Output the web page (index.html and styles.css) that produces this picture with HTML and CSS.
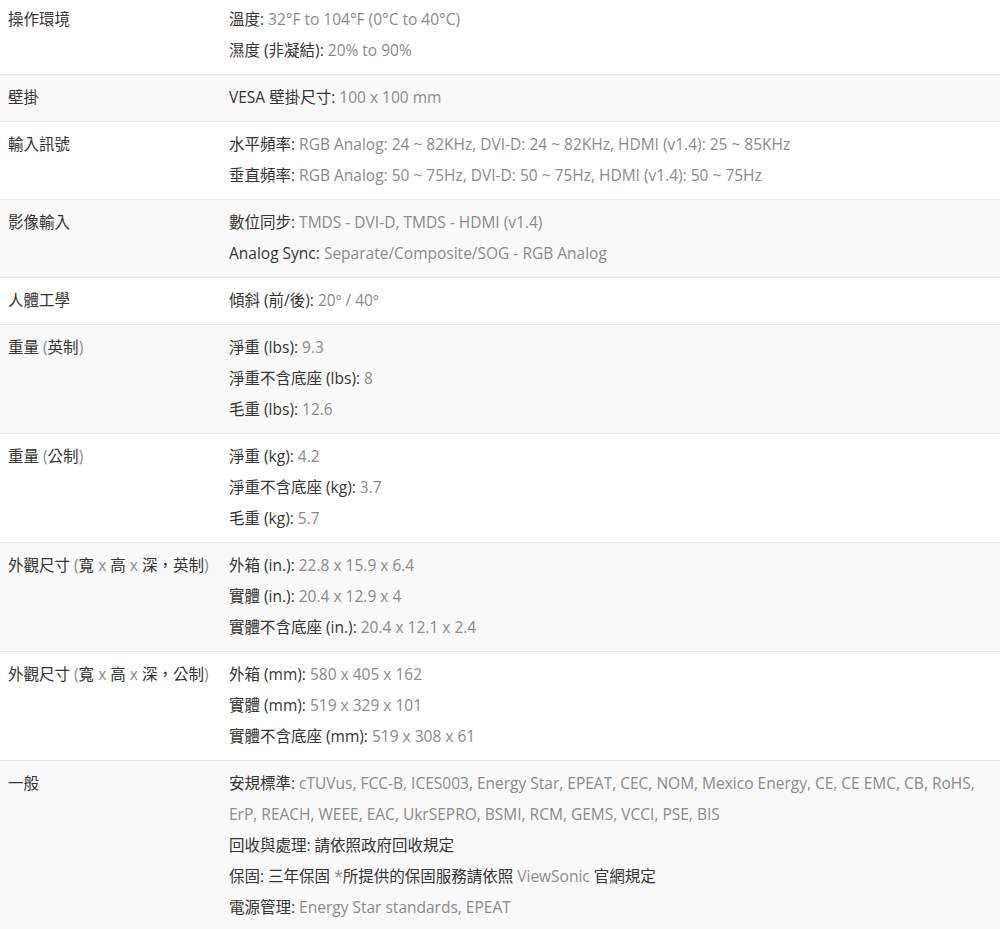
FILE: index.html
```html
<!DOCTYPE html>
<html lang="zh-Hant">
<head>
  <meta charset="UTF-8" />
  <meta name="viewport" content="width=device-width, initial-scale=1" />
  <title>規格</title>
  <link rel="stylesheet" href="styles.css">
</head>

<body>
  <div class="specs">
    <div class="row">
      <div class="label">操作環境</div>
      <div class="value">
        <p><span class="key">溫度:</span> 32°F to 104°F (0°C to 40°C)</p>
        <p><span class="key">濕度 (非凝結):</span> 20% to 90%</p>
      </div>
    </div>

    <div class="row">
      <div class="label">壁掛</div>
      <div class="value">
        <p><span class="key">VESA 壁掛尺寸:</span> 100 x 100 mm</p>
      </div>
    </div>

    <div class="row">
      <div class="label">輸入訊號</div>
      <div class="value">
        <p><span class="key">水平頻率:</span> RGB Analog: 24 ~ 82KHz, DVI-D: 24 ~ 82KHz, HDMI (v1.4): 25 ~ 85KHz</p>
        <p><span class="key">垂直頻率:</span> RGB Analog: 50 ~ 75Hz, DVI-D: 50 ~ 75Hz, HDMI (v1.4): 50 ~ 75Hz</p>
      </div>
    </div>

    <div class="row">
      <div class="label">影像輸入</div>
      <div class="value">
        <p><span class="key">數位同步:</span> TMDS - DVI-D, TMDS - HDMI (v1.4)</p>
        <p><span class="key">Analog Sync:</span> Separate/Composite/SOG - RGB Analog</p>
      </div>
    </div>

    <div class="row">
      <div class="label">人體工學</div>
      <div class="value">
        <p><span class="key">傾斜 (前/後):</span> 20º / 40º</p>
      </div>
    </div>

    <div class="row">
      <div class="label">重量 <span class="lat">(</span>英制<span class="lat">)</span></div>
      <div class="value">
        <p><span class="key">淨重 (lbs):</span> 9.3</p>
        <p><span class="key">淨重不含底座 (lbs):</span> 8</p>
        <p><span class="key">毛重 (lbs):</span> 12.6</p>
      </div>
    </div>

    <div class="row">
      <div class="label">重量 <span class="lat">(</span>公制<span class="lat">)</span></div>
      <div class="value">
        <p><span class="key">淨重 (kg):</span> 4.2</p>
        <p><span class="key">淨重不含底座 (kg):</span> 3.7</p>
        <p><span class="key">毛重 (kg):</span> 5.7</p>
      </div>
    </div>

    <div class="row">
      <div class="label">外觀尺寸 <span class="lat">(</span>寬 <span class="lat">x</span> 高 <span class="lat">x</span> 深，英制<span class="lat">)</span></div>
      <div class="value">
        <p><span class="key">外箱 (in.):</span> 22.8 x 15.9 x 6.4</p>
        <p><span class="key">實體 (in.):</span> 20.4 x 12.9 x 4</p>
        <p><span class="key">實體不含底座 (in.):</span> 20.4 x 12.1 x 2.4</p>
      </div>
    </div>

    <div class="row">
      <div class="label">外觀尺寸 <span class="lat">(</span>寬 <span class="lat">x</span> 高 <span class="lat">x</span> 深，公制<span class="lat">)</span></div>
      <div class="value">
        <p><span class="key">外箱 (mm):</span> 580 x 405 x 162</p>
        <p><span class="key">實體 (mm):</span> 519 x 329 x 101</p>
        <p><span class="key">實體不含底座 (mm):</span> 519 x 308 x 61</p>
      </div>
    </div>

    <div class="row">
      <div class="label">一般</div>
      <div class="value">
        <p><span class="key">安規標準:</span> cTUVus, FCC-B, ICES003, Energy Star, EPEAT, CEC, NOM, Mexico Energy, CE, CE EMC, CB, RoHS, ErP, REACH, WEEE, EAC, UkrSEPRO, BSMI, RCM, GEMS, VCCI, PSE, BIS</p>
        <p><span class="key">回收與處理:</span> <span class="cjk">請依照政府回收規定</span></p>
        <p><span class="key">保固:</span> <span class="cjk">三年保固</span> *<span class="cjk">所提供的保固服務請依照</span> ViewSonic <span class="cjk">官網規定</span></p>
        <p><span class="key">電源管理:</span> Energy Star standards, EPEAT</p>
      </div>
    </div>
  </div>
</body>
</html>
```

FILE: styles.css
```css
body {
  margin: 0;
  background-color: #ffffff;
  font-family: "Open Sans", "Noto Sans CJK TC", sans-serif;
  font-size: 15.5px;
  color: #8a8a8a;
}

.specs {
  margin-top: -3px;
}

.row {
  display: grid;
  grid-template-columns: 221px 1fr;
  padding: 7px 18px 8px 8px;
  border-bottom: 1px solid #e6e6e6;
  line-height: 31px;
}

.row:nth-child(even) {
  background-color: #f9f9f9;
}

.label {
  color: #333333;
}

.label .lat {
  color: #8a8a8a;
}

.value p {
  margin: 0;
}

.key,
.cjk {
  color: #333333;
}
```
